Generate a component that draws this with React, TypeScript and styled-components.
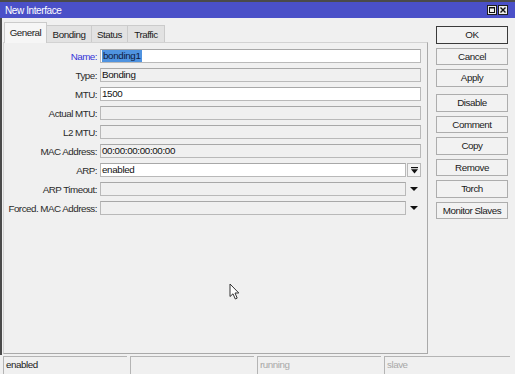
import React from "react";
import styled, { createGlobalStyle } from "styled-components";

const GlobalStyle = createGlobalStyle`
  html, body {
    margin: 0;
    padding: 0;
    background: #f0f0f0;
  }
  body {
    font-family: "Liberation Sans", Arial, sans-serif;
  }
`;

const Window = styled.div`
  position: relative;
  width: 515px;
  height: 374px;
  box-sizing: border-box;
  border-top: 2px solid #4a4a4a;
  background: #f0f0f0;
  display: flex;
  flex-direction: column;
  overflow: hidden;
`;

const TitleBar = styled.div`
  height: 16px;
  flex: none;
  background: #4a50c8;
  display: flex;
  align-items: center;
  padding: 0 7px 0 5px;
`;

const Title = styled.span`
  flex: 1;
  color: #ffffff;
  font-size: 10px;
  letter-spacing: -0.4px;
`;

const TitleButtons = styled.div`
  display: flex;
  gap: 1px;
`;

const TitleButton = styled.div`
  width: 10px;
  height: 10px;
  box-sizing: border-box;
  border: 1px solid #1e1e1e;
  background: #ececec;
  display: flex;
  align-items: center;
  justify-content: center;
`;

const Body = styled.div`
  flex: 1;
  min-height: 0;
  display: flex;
  padding: 4px 0 1px 1px;
  border-left: 2px solid #4a4a4a;
`;

const Main = styled.div`
  width: 425px;
  display: flex;
  flex-direction: column;
`;

const TabStrip = styled.div`
  height: 20px;
  display: flex;
  align-items: flex-end;
  padding-left: 1px;
`;

const Tab = styled.div<{ $active?: boolean; $w: number }>`
  width: ${({ $w }) => $w}px;
  height: ${({ $active }) => ($active ? 21 : 17)}px;
  margin-bottom: ${({ $active }) => ($active ? -1 : 0)}px;
  margin-left: ${({ $active }) => ($active ? 0 : -1)}px;
  position: relative;
  z-index: ${({ $active }) => ($active ? 1 : 0)};
  box-sizing: border-box;
  border: 1px solid #cbcbcb;
  border-bottom: none;
  background: ${({ $active }) => ($active ? "#f6f6f6" : "#e2e2e2")};
  display: flex;
  align-items: ${({ $active }) => ($active ? "flex-start" : "center")};
  padding-top: ${({ $active }) => ($active ? 4 : 0)}px;
  justify-content: center;
  font-size: 9.8px;
  letter-spacing: -0.45px;
  color: #1a1a1a;
  &:first-child {
    margin-left: 0;
  }
`;

const Panel = styled.div`
  flex: 1;
  box-sizing: border-box;
  border: 1px solid #d2d2d2;
  border-right-color: #a9a9a9;
  border-bottom-color: #a9a9a9;
  padding: 6px 6px 0 0;
`;

const Form = styled.div`
  display: grid;
  grid-template-columns: 93px 1fr;
  column-gap: 3px;
  row-gap: 5px;
  align-items: center;
`;

const Label = styled.label<{ $focus?: boolean }>`
  text-align: right;
  font-size: 9.8px;
  letter-spacing: -0.5px;
  color: ${({ $focus }) => ($focus ? "#3434d8" : "#2a2a2a")};
  white-space: nowrap;
`;

const FieldRow = styled.div`
  display: flex;
  gap: 1px;
  align-items: center;
`;

const Field = styled.div<{ $editable?: boolean }>`
  flex: 1;
  height: 14px;
  box-sizing: border-box;
  border: 1px solid #b9b9b9;
  border-top-color: #a8a8a8;
  background: ${({ $editable }) => ($editable ? "#ffffff" : "#f0f0f0")};
  padding: 0 1px;
  font-size: 9.8px;
  letter-spacing: -0.35px;
  line-height: 12px;
  color: #111111;
  white-space: nowrap;
  overflow: hidden;
`;

const Selected = styled.span`
  display: inline-block;
  padding: 0 1px;
  background: #4f93e0;
  color: #0e1a40;
`;

const DropButton = styled.div<{ $boxed?: boolean }>`
  width: 14px;
  height: 14px;
  box-sizing: border-box;
  border: 1px solid ${({ $boxed }) => ($boxed ? "#b9b9b9" : "transparent")};
  background: ${({ $boxed }) => ($boxed ? "#f4f4f4" : "transparent")};
  display: flex;
  align-items: center;
  justify-content: center;
`;

const ButtonColumn = styled.div`
  width: 72px;
  margin: 4px 0 0 8px;
  display: flex;
  flex-direction: column;
  gap: 4px;
`;

const Button = styled.div<{ $default?: boolean; $groupStart?: boolean }>`
  height: 17.5px;
  box-sizing: border-box;
  border: 1px solid ${({ $default }) => ($default ? "#3a3a3a" : "#adadad")};
  background: #f2f2f2;
  margin-top: ${({ $groupStart }) => ($groupStart ? 3.5 : 0)}px;
  display: flex;
  align-items: center;
  justify-content: center;
  font-size: 9.8px;
  letter-spacing: -0.45px;
  color: #1a1a1a;
`;

const StatusBar = styled.div`
  height: 19px;
  flex: none;
  display: flex;
  gap: 3px;
  padding: 1px 5px 0 3px;
  box-sizing: border-box;
`;

const StatusCell = styled.div<{ $dim?: boolean; $grow?: boolean }>`
  width: 124px;
  flex: ${({ $grow }) => ($grow ? 1 : "none")};
  box-sizing: border-box;
  border-top: 1px solid #b4b4b4;
  border-left: 1px solid #b4b4b4;
  padding: 2px 2px 0;
  font-size: 9.8px;
  line-height: 12px;
  letter-spacing: -0.45px;
  color: ${({ $dim }) => ($dim ? "#a8a8a8" : "#1a1a1a")};
`;

const Cursor = styled.svg`
  position: absolute;
  left: 229px;
  top: 281px;
`;

type Row = {
  label: string;
  value?: React.ReactNode;
  editable?: boolean;
  focus?: boolean;
  drop?: "boxed" | "plain";
};

const rows: Row[] = [
  { label: "Name:", value: <Selected>bonding1</Selected>, editable: true, focus: true },
  { label: "Type:", value: "Bonding" },
  { label: "MTU:", value: "1500", editable: true },
  { label: "Actual MTU:" },
  { label: "L2 MTU:" },
  { label: "MAC Address:", value: "00:00:00:00:00:00" },
  { label: "ARP:", value: "enabled", editable: true, drop: "boxed" },
  { label: "ARP Timeout:", drop: "plain" },
  { label: "Forced. MAC Address:", drop: "plain" },
];

const buttons = [
  { text: "OK", isDefault: true },
  { text: "Cancel" },
  { text: "Apply" },
  { text: "Disable", groupStart: true },
  { text: "Comment" },
  { text: "Copy" },
  { text: "Remove" },
  { text: "Torch" },
  { text: "Monitor Slaves" },
];

const tabs = [
  { name: "General", w: 43 },
  { name: "Bonding", w: 46 },
  { name: "Status", w: 37 },
  { name: "Traffic", w: 38 },
];

function DropIcon({ kind }: { kind: "boxed" | "plain" }) {
  if (kind === "boxed") {
    return (
      <svg width="7" height="7" viewBox="0 0 7 7">
        <rect x="0" y="0" width="7" height="1.2" fill="#111" />
        <polygon points="0,2.2 7,2.2 3.5,6.5" fill="#111" />
      </svg>
    );
  }
  return (
    <svg width="8" height="4" viewBox="0 0 8 4">
      <polygon points="0,0 8,0 4,4" fill="#111" />
    </svg>
  );
}

export default function App() {
  return (
    <>
      <GlobalStyle />
      <Window>
        <TitleBar>
          <Title>New Interface</Title>
          <TitleButtons>
            <TitleButton>
              <svg width="6" height="6" viewBox="0 0 6 6">
                <rect x="0.5" y="0.5" width="5" height="5" fill="none" stroke="#111" />
                <rect x="0.5" y="0.5" width="5" height="1" fill="#111" />
              </svg>
            </TitleButton>
            <TitleButton>
              <svg width="6" height="6" viewBox="0 0 6 6">
                <path d="M0.5 0.5 L5.5 5.5 M5.5 0.5 L0.5 5.5" stroke="#111" strokeWidth="1.4" />
              </svg>
            </TitleButton>
          </TitleButtons>
        </TitleBar>

        <Body>
          <Main>
            <TabStrip>
              {tabs.map((t, i) => (
                <Tab key={t.name} $w={t.w} $active={i === 0}>
                  {t.name}
                </Tab>
              ))}
            </TabStrip>
            <Panel>
              <Form>
                {rows.map(r => (
                  <React.Fragment key={r.label}>
                    <Label $focus={r.focus}>{r.label}</Label>
                    <FieldRow>
                      <Field $editable={r.editable}>{r.value}</Field>
                      {r.drop && (
                        <DropButton $boxed={r.drop === "boxed"}>
                          <DropIcon kind={r.drop} />
                        </DropButton>
                      )}
                    </FieldRow>
                  </React.Fragment>
                ))}
              </Form>
            </Panel>
          </Main>

          <ButtonColumn>
            {buttons.map(b => (
              <Button key={b.text} $default={b.isDefault} $groupStart={b.groupStart}>
                {b.text}
              </Button>
            ))}
          </ButtonColumn>
        </Body>

        <StatusBar>
          <StatusCell>enabled</StatusCell>
          <StatusCell />
          <StatusCell $dim>running</StatusCell>
          <StatusCell $dim $grow>slave</StatusCell>
        </StatusBar>

        <Cursor width="11" height="18" viewBox="0 0 11 18">
          <path
            d="M1 1 L1 13.5 L4 10.8 L6.3 16 L8.2 15.1 L6 10 L9.8 10 Z"
            fill="#ffffff"
            stroke="#333"
            strokeWidth="1"
            strokeLinejoin="round"
          />
        </Cursor>
      </Window>
    </>
  );
}
